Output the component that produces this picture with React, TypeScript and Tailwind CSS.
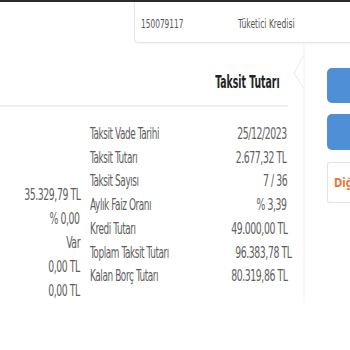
import React from "react";

const labels = [
  "Taksit Vade Tarihi",
  "Taksit Tutarı",
  "Taksit Sayısı",
  "Aylık Faiz Oranı",
  "Kredi Tutarı",
  "Toplam Taksit Tutarı",
  "Kalan Borç Tutarı",
];
const values = [
  "25/12/2023",
  "2.677,32 TL",
  "7 / 36",
  "% 3,39",
  "49.000,00 TL",
  "96.383,78 TL",
  "80.319,86 TL",
];
const leftValues = ["35.329,79 TL", "% 0,00", "Var", "0,00 TL", "0,00 TL"];

export default function App() {
  return (
    <div
      className="w-[350px] h-[350px] bg-white overflow-hidden text-[#5e5e5e]"
      style={{ fontFamily: '"Liberation Sans Narrow", "DejaVu Sans Condensed", "Liberation Sans", sans-serif' }}
    >
      <div className="h-[2px] bg-[#2b2b2b]" />
      <div className="flex">
        <div className="ml-[134px] flex-1 h-[41px] border-l border-b border-[#e6e6e6] rounded-bl-[5px] shadow-[0_1px_2px_rgba(0,0,0,0.05)] flex items-center text-[13px] text-[#555] pt-[3px] whitespace-nowrap">
          <span className="ml-[6px] w-[97px] inline-block origin-left scale-x-[0.635]">150079117</span>
          <span className="inline-block origin-left scale-x-[0.65]">Tüketici Kredisi</span>
        </div>
      </div>
      <div className="flex">
        <div className="w-[290px] shrink-0">
          <div className="h-[62px] flex items-end justify-end pr-[10px] pb-[10px]">
            <span className="inline-block origin-right scale-x-[0.61] text-[17px] font-bold text-[#222] whitespace-nowrap">Taksit Tutarı</span>
          </div>
          <div className="h-[2px] w-[288px] bg-[#f0f0f0]" />
          <div className="flex text-[15px] tracking-[-0.6px] whitespace-nowrap">
            <div className="w-[80px] pt-[76px] flex flex-col items-end leading-[24px]">
              {leftValues.map((v, i) => (
                <div key={i} className="origin-right scale-x-[0.69]">{v}</div>
              ))}
            </div>
            <div className="w-[197px] ml-[10px] pt-[16px] flex flex-col leading-[23.7px]">
              {labels.map((l, i) => (
                <div key={i} className="flex justify-between">
                  <span className="inline-block origin-left scale-x-[0.66]">{l}</span>
                  <span className="inline-block origin-right scale-x-[0.69]">{values[i]}</span>
                </div>
              ))}
            </div>
          </div>
        </div>
        <div className="w-[37px] shrink-0">
          <svg width="37" height="260" className="block">
            <path d="M14 12 L4 30 L14 46" stroke="#efefef" strokeWidth="1.2" fill="none" />
            <line x1="14" y1="0" x2="14" y2="260" stroke="#f3f3f3" strokeWidth="1" />
          </svg>
        </div>
        <div className="flex-1 flex flex-col pt-[25px]">
          <div className="h-[35px] rounded-l-[5px] bg-[#4f8fd6]" />
          <div className="h-[36px] mt-[11px] rounded-l-[5px] bg-[#4f8fd6]" />
          <div className="h-[41px] mt-[12px] rounded-l-[3px] border border-r-0 border-[#e3e3e3] flex items-center pl-[6px] text-[13px] font-semibold text-[#e8783a] whitespace-nowrap">
            <span className="inline-block origin-left scale-x-[0.85]">Diğer</span>
          </div>
        </div>
      </div>
    </div>
  );
}
